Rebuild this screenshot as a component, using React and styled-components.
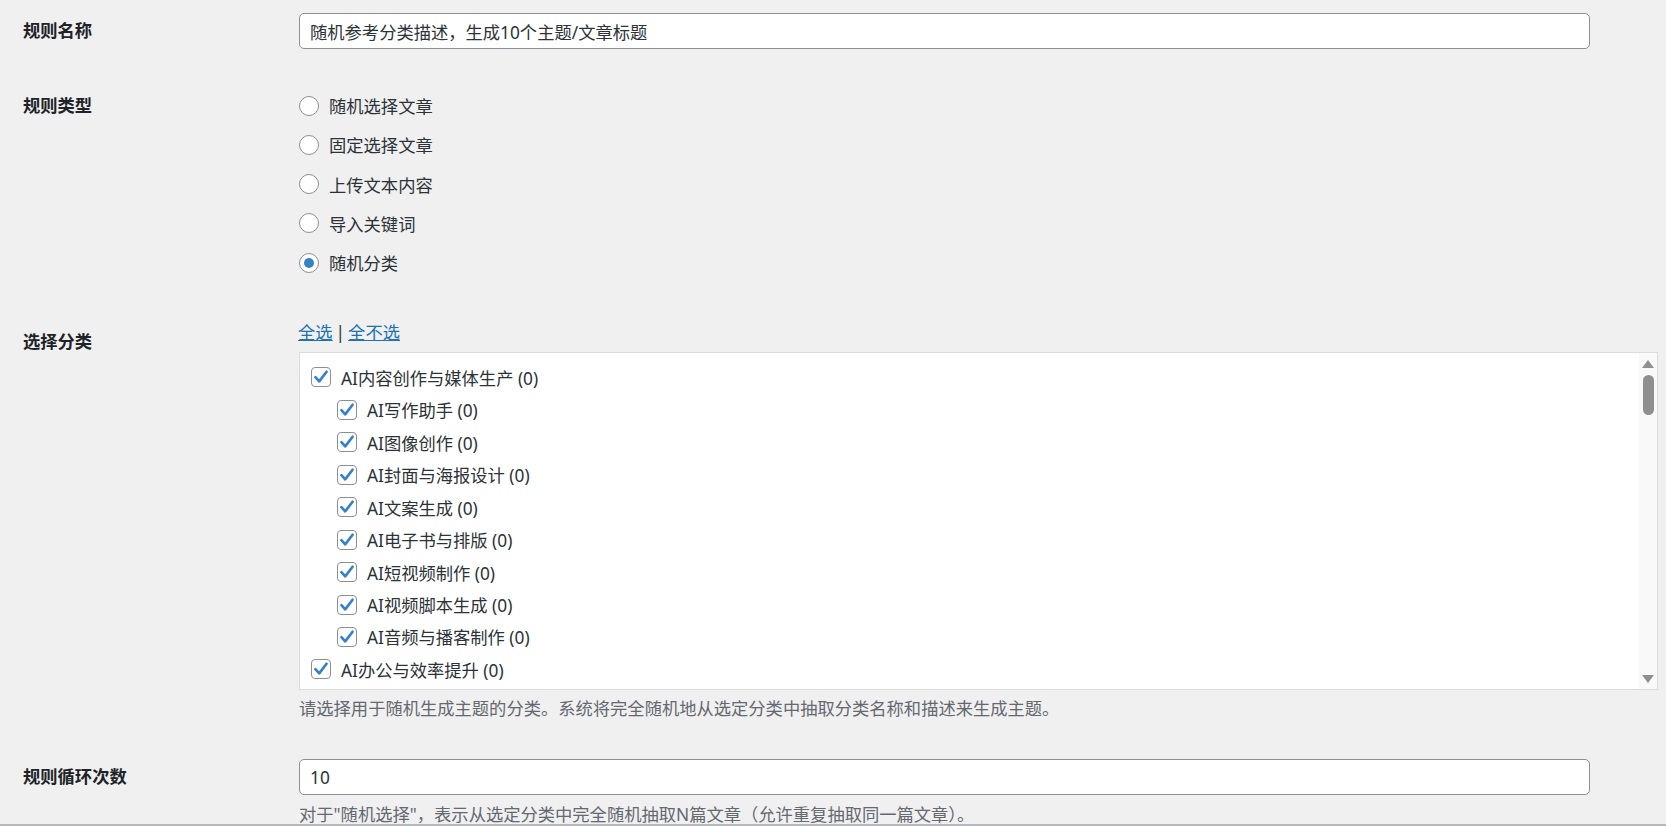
import React from "react";
import styled, { createGlobalStyle } from "styled-components";

const Global = createGlobalStyle`
  html, body { margin: 0; padding: 0; background: #f0f0f1; }
  body {
    font-family: "Noto Sans", "Noto Sans CJK SC", sans-serif;
    font-size: 17.3px;
    color: #2c3338;
    overflow: hidden;
  }
  * { box-sizing: border-box; }
`;

const Page = styled.div`
  padding: 13px 8px 0 23px;
  height: 826px;
`;

const Row = styled.div`
  display: grid;
  grid-template-columns: 276px 1fr;
  margin-top: ${(p) => p.$gap || 0}px;
`;

const Label = styled.div`
  font-weight: 700;
  color: #1d2327;
  line-height: ${(p) => p.$lh}px;
  padding-top: ${(p) => p.$pt || 0}px;
`;

const Field = styled.div`
  display: flex;
  flex-direction: column;
  align-items: flex-start;
`;

const TextInput = styled.input`
  width: 95%;
  height: 36px;
  border: 1px solid #8c8f94;
  border-radius: 5px;
  background: #fff;
  padding: 0 10px;
  font: inherit;
  color: #2c3338;
  outline: none;
`;

const RadioList = styled.div`
  display: flex;
  flex-direction: column;
`;

const RadioRow = styled.label`
  display: flex;
  align-items: center;
  gap: 10px;
  height: 39.25px;
  color: #2c3338;
`;

const RadioCircle = styled.span`
  width: 20px;
  height: 20px;
  border-radius: 50%;
  border: 1px solid #8c8f94;
  background: #fff;
  display: flex;
  align-items: center;
  justify-content: center;
  flex: none;
  &::after {
    content: "";
    width: 10px;
    height: 10px;
    border-radius: 50%;
    background: ${(p) => (p.$on ? "#3582c4" : "transparent")};
  }
`;

const LinkLine = styled.div`
  line-height: 22px;
  color: #2c3338;
  margin-left: -1px;
`;

const Link = styled.a`
  color: #2271b1;
  text-decoration: underline;
  cursor: pointer;
`;

const Sep = styled.span`
  margin: 0 3px;
  color: #2c3338;
`;

const Box = styled.div`
  margin-top: 8px;
  width: 100%;
  height: 338px;
  border: 1px solid #dcdcde;
  background: #fff;
  display: flex;
`;

const List = styled.ul`
  list-style: none;
  margin: 0;
  padding: 8px 0 0 11px;
  flex: 1;
  overflow: hidden;
`;

const Item = styled.li`
  display: flex;
  align-items: center;
  gap: 10px;
  height: 32.45px;
  padding-left: ${(p) => (p.$child ? 26 : 0)}px;
  color: #2c3338;
  white-space: nowrap;
`;

const CheckBox = styled.span`
  width: 20px;
  height: 20px;
  border: 1px solid #8c8f94;
  border-radius: 4px;
  background: #fff;
  flex: none;
  display: flex;
  align-items: center;
  justify-content: center;
`;

const Scrollbar = styled.div`
  width: 18px;
  flex: none;
  background: #f9f9f9;
  display: flex;
  flex-direction: column;
  align-items: center;
  padding: 7px 0 6px;
`;

const Arrow = styled.span`
  width: 0;
  height: 0;
  border-left: 6.5px solid transparent;
  border-right: 6.5px solid transparent;
  ${(p) =>
    p.$down
      ? "border-top: 8px solid #8f8f8f;"
      : "border-bottom: 8px solid #8f8f8f;"}
`;

const Thumb = styled.span`
  margin-top: 7px;
  width: 11px;
  height: 40px;
  border-radius: 6px;
  background: #8f8f8f;
`;

const Spacer = styled.span`
  flex: 1;
`;

const Desc = styled.p`
  margin: ${(p) => p.$mt}px 0 0;
  line-height: 22px;
  color: #646970;
`;

const BottomLine = styled.div`
  position: fixed;
  left: 0;
  right: 0;
  bottom: 0;
  height: 2px;
  background: #b4b9be;
`;

const Check = () => (
  <svg width="18" height="18" viewBox="0 0 20 20">
    <path
      d="M3.8 10.2 L8 14.8 L16.2 4.2"
      fill="none"
      stroke="#3582c4"
      strokeWidth="3"
      strokeLinecap="round"
      strokeLinejoin="round"
    />
  </svg>
);

const radios = ["随机选择文章", "固定选择文章", "上传文本内容", "导入关键词", "随机分类"];

const cats = [
  ["AI内容创作与媒体生产 (0)", false],
  ["AI写作助手 (0)", true],
  ["AI图像创作 (0)", true],
  ["AI封面与海报设计 (0)", true],
  ["AI文案生成 (0)", true],
  ["AI电子书与排版 (0)", true],
  ["AI短视频制作 (0)", true],
  ["AI视频脚本生成 (0)", true],
  ["AI音频与播客制作 (0)", true],
  ["AI办公与效率提升 (0)", false],
];

export default function App() {
  return (
    <>
      <Global />
      <Page>
        <Row>
          <Label $lh={36}>规则名称</Label>
          <Field>
            <TextInput defaultValue="随机参考分类描述，生成10个主题/文章标题" />
          </Field>
        </Row>

        <Row $gap={37}>
          <Label $lh={39}>规则类型</Label>
          <RadioList>
            {radios.map((r, i) => (
              <RadioRow key={r}>
                <RadioCircle $on={i === 4} />
                {r}
              </RadioRow>
            ))}
          </RadioList>
        </Row>

        <Row $gap={40}>
          <Label $lh={22} $pt={9}>选择分类</Label>
          <Field>
            <LinkLine>
              <Link>全选</Link>
              <Sep>|</Sep>
              <Link>全不选</Link>
            </LinkLine>
            <Box>
              <List>
                {cats.map(([t, child]) => (
                  <Item key={t} $child={child}>
                    <CheckBox>
                      <Check />
                    </CheckBox>
                    {t}
                  </Item>
                ))}
              </List>
              <Scrollbar>
                <Arrow />
                <Thumb />
                <Spacer />
                <Arrow $down />
              </Scrollbar>
            </Box>
            <Desc $mt={8}>
              请选择用于随机生成主题的分类。系统将完全随机地从选定分类中抽取分类名称和描述来生成主题。
            </Desc>
          </Field>
        </Row>

        <Row $gap={39}>
          <Label $lh={36}>规则循环次数</Label>
          <Field>
            <TextInput defaultValue="10" />
            <Desc $mt={9}>
              对于"随机选择"，表示从选定分类中完全随机抽取N篇文章（允许重复抽取同一篇文章）。
            </Desc>
          </Field>
        </Row>
      </Page>
      <BottomLine />
    </>
  );
}
